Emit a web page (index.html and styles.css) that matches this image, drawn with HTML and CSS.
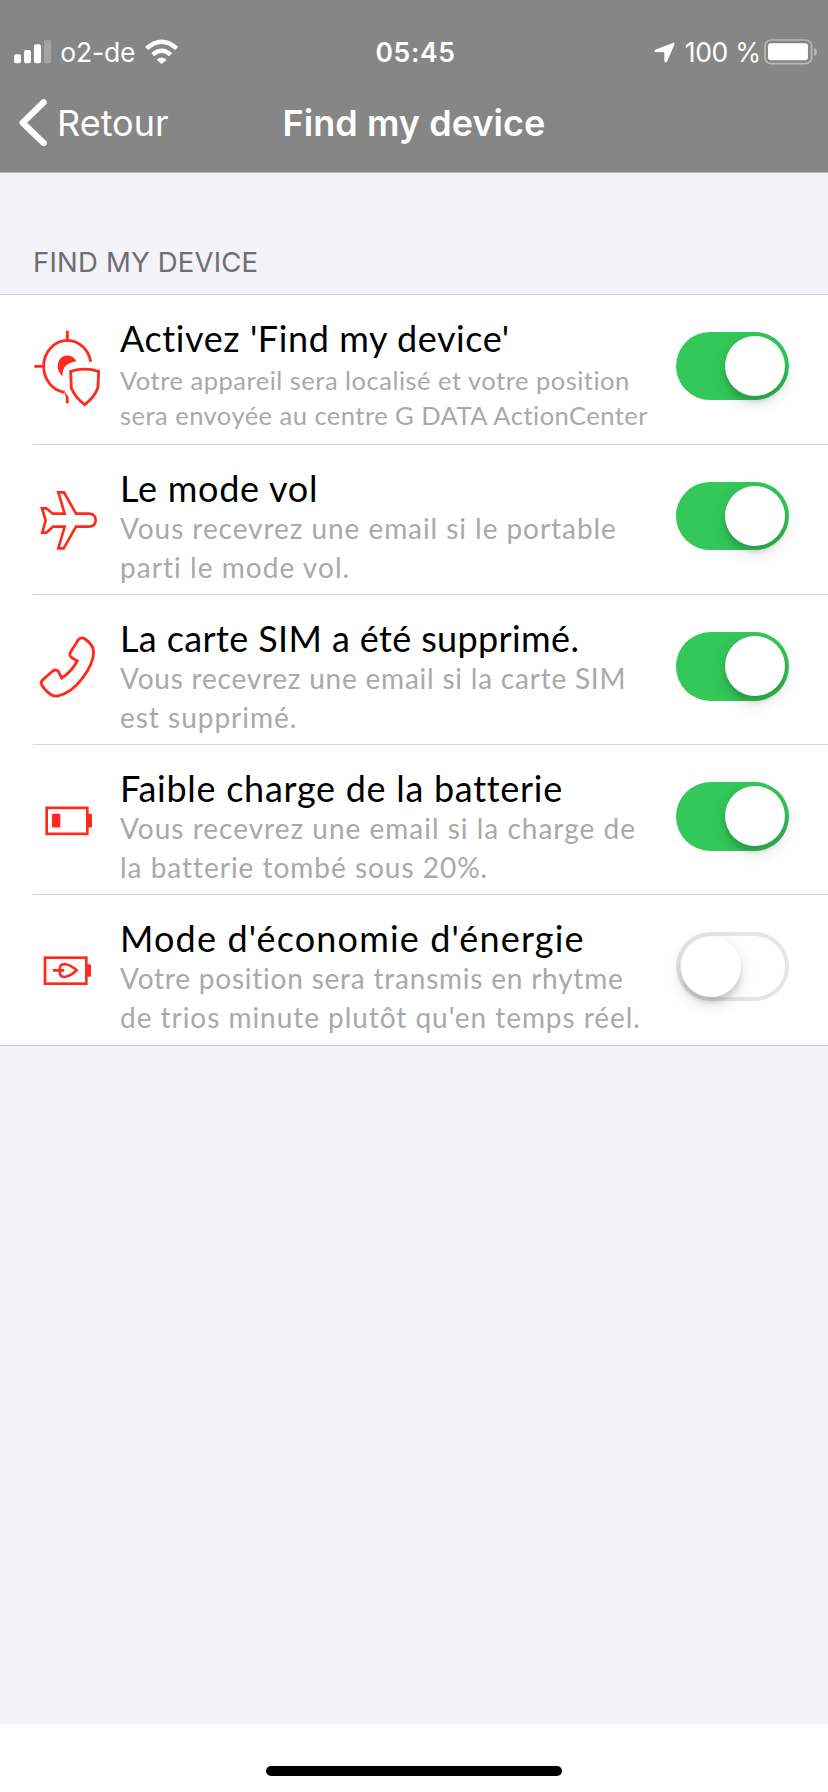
FILE: index.html
```html
<!DOCTYPE html>
<html lang="fr">
<head>
<meta charset="utf-8">
<title>Find my device</title>
<link rel="stylesheet" href="styles.css">
</head>
<body>
<div class="screen">
  <header class="top">
    <div class="status">
      <div class="status-left">
        <svg class="signal" viewBox="0 0 112 72"><g fill="#fff"><rect x="0" y="43" width="21" height="27" rx="6"/><rect x="30" y="30" width="21" height="40" rx="6"/><rect x="60" y="13" width="21" height="57" rx="6"/><rect x="90" y="0" width="21" height="70" rx="6" opacity=".25"/></g></svg>
        <span class="carrier">o2-de</span>
        <svg class="wifi" viewBox="436 58 100 76"><path d="M441 86Q486 46 531 86M459 105Q486 82 513 105" fill="none" stroke="#fff" stroke-width="13"/><path d="M471 120Q486 107 501 120L486 133Z" fill="#fff"/></svg>
      </div>
      <div class="clock">05:45</div>
      <div class="status-right">
        <svg class="arrow" viewBox="69 67 63 63"><path d="M127 69Q132 69 130 75L108 126Q102 131 100 125V101Q100 98 97 98L73 97Q67 94 73 90Z" fill="#fff"/></svg>
        <span class="percent">100 %</span>
        <svg class="battery" viewBox="402 56 160 77"><rect x="405" y="59" width="140" height="71" rx="18" fill="none" stroke="#fff" stroke-opacity=".42" stroke-width="5"/><rect x="414" y="69" width="120" height="51" rx="9" fill="#fff"/><path d="M553 82Q561 86 561 95T553 108Z" fill="#fff" opacity=".45"/></svg>
      </div>
    </div>
    <nav class="nav">
      <div class="back">
        <svg class="chevron" viewBox="57 237 84 142"><path d="M131 247L68 308L131 369" fill="none" stroke="#fff" stroke-width="19" stroke-linecap="round" stroke-linejoin="round"/></svg>
        <span>Retour</span>
      </div>
      <h1 class="nav-title">Find my device</h1>
    </nav>
  </header>

  <h2 class="section">FIND MY DEVICE</h2>

  <main class="list">
    <section class="row row-first">
      <svg class="icon" viewBox="90 195 210 451">
        <g fill="none" stroke="#ff2a1c" stroke-width="8.5">
          <path d="M272 395A72 78 0 0 0 203 331A72 78 0 0 0 131 409A72 78 0 0 0 194 487"/>
          <path d="M202 302V331M103 409H131"/>
          <path d="M212 424Q254 411 296 424L294 472Q283 503 254 524Q226 503 214 474Z"/>
        </g>
        <path d="M229 394C220 370 179 368 174 402C171 419 178 430 188 438C187 417 193 401 229 394ZM193 484L206 502V520H198L197 500Z" fill="#ff2a1c"/>
      </svg>
      <div class="copy">
        <h3 class="title t1">Activez 'Find my device'</h3>
        <p class="line d1a">Votre appareil sera localisé et votre position</p>
        <p class="line d1b">sera envoyée au centre G DATA ActionCenter</p>
      </div>
      <div class="toggle on"><i class="thumb"></i></div>
    </section>
    <section class="row">
      <svg class="icon" viewBox="30 -75 210 451">
        <path d="M115 67H132L168 131H208Q227 133 227 151T208 170H168L131 235H115L134 170H99L79 188H67L77 151L66 115H79L98 131H134Z" fill="none" stroke="#ff2a1c" stroke-width="8"/>
      </svg>
      <div class="copy">
        <h3 class="title t2">Le mode vol</h3>
        <p class="line d2a">Vous recevrez une email si le portable</p>
        <p class="line d2b">parti le mode vol.</p>
      </div>
      <div class="toggle on"><i class="thumb"></i></div>
    </section>
    <section class="row">
      <svg class="icon" viewBox="30 -74 210 451">
        <path d="M176 59Q185 51 195 58Q222 77 221 98C220 139 170 218 113 229Q101 231 90 223Q73 211 65 195Q61 187 69 180L98 154Q107 147 115 155L125 175Q154 157 172 124L154 113Q146 106 152 96Z" fill="none" stroke="#ff2a1c" stroke-width="8.5" stroke-linejoin="miter"/>
      </svg>
      <div class="copy">
        <h3 class="title t3">La carte SIM a été supprimé.</h3>
        <p class="line d3a">Vous recevrez une email si la carte SIM</p>
        <p class="line d3b">est supprimé.</p>
      </div>
      <div class="toggle on"><i class="thumb"></i></div>
    </section>
    <section class="row">
      <svg class="icon" viewBox="30 -73.5 210 451">
        <rect x="80" y="115" width="122" height="78" fill="none" stroke="#ff2a1c" stroke-width="8"/>
        <rect x="96" y="133" width="25" height="41" rx="4" fill="#ff2a1c"/>
        <rect x="201" y="133" width="15" height="41" rx="4" fill="#ff2a1c"/>
      </svg>
      <div class="copy">
        <h3 class="title t4">Faible charge de la batterie</h3>
        <p class="line d4a">Vous recevrez une email si la charge de</p>
        <p class="line d4b">la batterie tombé sous 20%.</p>
      </div>
      <div class="toggle on"><i class="thumb"></i></div>
    </section>
    <section class="row row-last">
      <svg class="icon" viewBox="30 377 210 451">
        <rect x="75" y="565" width="124" height="78" fill="none" stroke="#ff2a1c" stroke-width="8"/>
        <rect x="199" y="585" width="14" height="37" rx="3" fill="#ff2a1c"/>
        <path d="M99 603H128M119 600Q119 584 134 584Q151 586 170 603Q151 621 134 623Q119 622 119 607" fill="none" stroke="#ff2a1c" stroke-width="8"/>
        <circle cx="128" cy="603" r="5" fill="#ff2a1c"/>
      </svg>
      <div class="copy">
        <h3 class="title t5">Mode d'économie d'énergie</h3>
        <p class="line d5a">Votre position sera transmis en rhytme</p>
        <p class="line d5b">de trios minute plutôt qu'en temps réel.</p>
      </div>
      <div class="toggle"><i class="thumb"></i></div>
    </section>
  </main>

  <footer class="home"><div class="home-bar"></div></footer>
</div>
</body>
</html>
```
FILE: styles.css
```css
* { box-sizing: border-box; margin: 0; padding: 0; }
body { width: 828px; background: #f2f2f7; font-family: Inter, "Liberation Sans", sans-serif; }
.screen { display: flex; flex-direction: column; height: 1792px; background: #f2f2f7; }
svg { display: block; flex: none; }

.top { height: 173px; background: #868686; color: #fff; padding-top: 32px; border-bottom: 1px solid #b4b4b6; }
.status { display: grid; grid-template-columns: 1fr auto 1fr; align-items: center; height: 40px; padding: 0 11px 0 14px; font-size: 26.5px; line-height: 40px; white-space: nowrap; }
.status-left, .status-right { display: flex; align-items: center; }
.status-right { justify-content: flex-end; }
.signal { width: 37.3px; height: 24px; }
.carrier { margin-left: 9px; width: 76px; letter-spacing: -.2px; }
.wifi { width: 33.3px; height: 25.3px; margin-left: 9px; }
.clock { font-weight: 600; letter-spacing: .6px; }
.arrow { width: 21px; height: 21px; }
.percent { width: 79px; margin-left: 10px; letter-spacing: -.3px; }
.battery { width: 53.3px; height: 25.7px; }

.nav { display: grid; grid-template-columns: 1fr auto 1fr; align-items: center; height: 100px; font-size: 36px; line-height: 44px; }
.back { display: flex; align-items: center; gap: 10px; width: 220px; height: 44px; margin: 2px 0 0 19px; }
.chevron { width: 28px; height: 47.3px; }
.nav-title { grid-column: 2; margin-top: 2px; font-size: 36px; font-weight: 600; line-height: 44px; letter-spacing: .05px; }

.section { height: 121px; padding: 71px 0 0 33px; color: #6d6d72; font-size: 27.5px; font-weight: 400; line-height: 36px; letter-spacing: .2px; }

.list { background: #fff; border-top: 1px solid #cfcfd4; border-bottom: 1px solid #c8c8cc; font-family: Lato, "Open Sans", sans-serif; }
.row { display: flex; align-items: flex-start; height: 150.1px; padding: 0 39px 0 30px; background: linear-gradient(#d6d6d8, #d6d6d8) 33px 100% / 828px 1.6px no-repeat; }
.row-last { background: none; }
.icon { width: 70px; height: 150.35px; }
.copy { flex: 1; margin-left: 20px; padding-top: 21.5px; white-space: nowrap; min-width: 0; }
.title { font-size: 36px; font-weight: 400; line-height: 43.5px; margin-bottom: -1px; color: #000; }
.line { font-size: 28px; line-height: 38.5px; color: #a9a9a9; }
.row-first .title { margin-bottom: 2.5px; }
.row-first .line { font-size: 25.5px; line-height: 35px; }

.toggle { display: flex; flex: none; width: 112.6px; height: 68.4px; margin-top: 37px; padding: 4.2px; border-radius: 35px; background: #fff; box-shadow: inset 0 0 0 4px #e5e5e6; }
.toggle.on { justify-content: flex-end; background: #34c759; box-shadow: none; }
.thumb { width: 60px; height: 60px; border-radius: 50%; background: #fff; box-shadow: 0 6px 16px rgba(0,0,0,.15), 0 6px 4px rgba(0,0,0,.1); }

/* Per-line tracking */
.t1 { letter-spacing: .59px; }
.t2 { letter-spacing: .75px; }
.t3 { letter-spacing: .37px; }
.t4 { letter-spacing: .71px; }
.t5 { letter-spacing: 1.16px; }
.d1a { letter-spacing: .5px; }
.d1b { letter-spacing: .48px; }
.d2a { letter-spacing: .94px; }
.d2b { letter-spacing: 1.05px; }
.d3a { letter-spacing: .78px; }
.d3b { letter-spacing: .98px; }
.d4a { letter-spacing: 1px; }
.d4b { letter-spacing: .98px; }
.d5a { letter-spacing: .78px; }
.d5b { letter-spacing: .96px; }

.home { display: flex; justify-content: center; height: 68px; margin-top: auto; padding-top: 42px; background: #fff; }
.home-bar { width: 296px; height: 10px; border-radius: 5px; background: #000; }
```
